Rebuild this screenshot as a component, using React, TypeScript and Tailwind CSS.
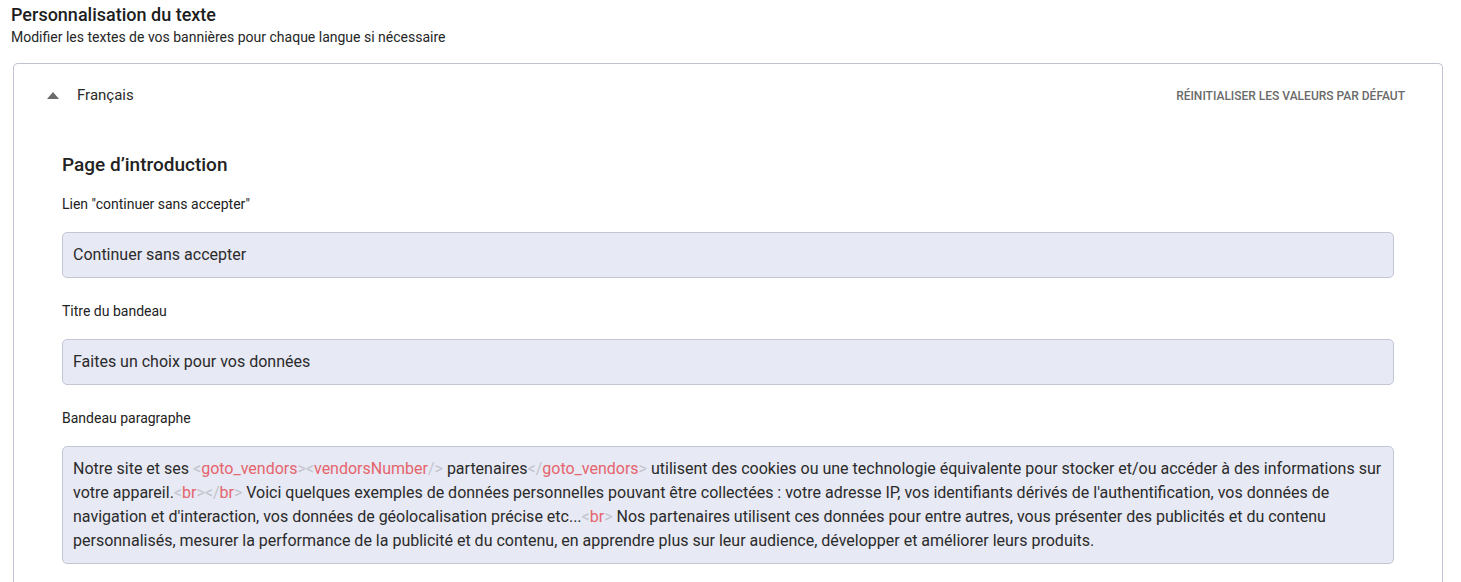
import { ReactNode } from "react";

function Tag({ children, close = false, self = false }: { children: ReactNode; close?: boolean; self?: boolean }) {
  return (
    <>
      <span className="text-[#c2c4cc]">{close ? "</" : "<"}</span>
      <span className="text-[#e5646d]">{children}</span>
      <span className="text-[#c2c4cc]">{self ? "/>" : ">"}</span>
    </>
  );
}

function Field({ label, children, tall = false }: { label: string; children: ReactNode; tall?: boolean }) {
  return (
    <div>
      <div className="text-[14px] text-[#222] leading-[20px] h-[20px]">{label}</div>
      <div
        className={`mt-[18px] rounded-[5px] border border-[#c3c7d3] bg-[#e7e9f4] px-[10px] text-[16px] text-[#2b2b2b] ${
          tall ? "pt-[10px] pb-[10px] leading-[24px]" : "h-[46px] flex items-center"
        }`}
      >
        {children}
      </div>
    </div>
  );
}

export default function App() {
  return (
    <div className="bg-white min-h-[582px] font-['Roboto',sans-serif] text-[#1f1f1f] pl-[11px] pr-[18px] pt-[3px]">
      <h1 className="text-[18px] font-medium leading-[24px] text-[#1d1d1d]">Personnalisation du texte</h1>
      <p className="text-[14px] leading-[18px] text-[#262626] mt-[1px]">
        Modifier les textes de vos bannières pour chaque langue si nécessaire
      </p>

      <div className="mt-[17px] ml-[2px] rounded-t-[5px] border border-b-0 border-[#bfc3d1] pb-6">
        <div className="flex items-center justify-between h-[63px] pl-[33px] pr-[37px]">
          <div className="flex items-center">
            <svg width="12" height="7" viewBox="0 0 12 7" className="mt-[-1px]">
              <path d="M0 7 L6 0 L12 7 Z" fill="#6b6b6b" />
            </svg>
            <span className="ml-[18px] text-[15px] text-[#2a2a2a]">Français</span>
          </div>
          <button className="text-[12px] font-medium uppercase text-[#6a6a6a]">
            Réinitialiser les valeurs par défaut
          </button>
        </div>

        <div className="pl-[48px] pr-[48px] pt-[26px] flex flex-col gap-[23px]">
          <h2 className="text-[19px] font-medium leading-[24px] text-[#222] mb-[-6px]">Page d’introduction</h2>

          <Field label={'Lien "continuer sans accepter"'}>Continuer sans accepter</Field>
          <Field label="Titre du bandeau">Faites un choix pour vos données</Field>
          <Field label="Bandeau paragraphe" tall>
            Notre site et ses <Tag>goto_vendors</Tag>
            <Tag self>vendorsNumber</Tag> partenaires<Tag close>goto_vendors</Tag> utilisent des cookies ou une
            technologie équivalente pour stocker et/ou accéder à des informations sur votre appareil.<Tag>br</Tag>
            <Tag close>br</Tag> Voici quelques exemples de données personnelles pouvant être collectées : votre
            adresse IP, vos identifiants dérivés de l'authentification, vos données de navigation et d'interaction, vos
            données de géolocalisation précise etc...<Tag>br</Tag> Nos partenaires utilisent ces données pour entre
            autres, vous présenter des publicités et du contenu personnalisés, mesurer la performance de la publicité et
            du contenu, en apprendre plus sur leur audience, développer et améliorer leurs produits.
          </Field>
        </div>
      </div>
    </div>
  );
}
